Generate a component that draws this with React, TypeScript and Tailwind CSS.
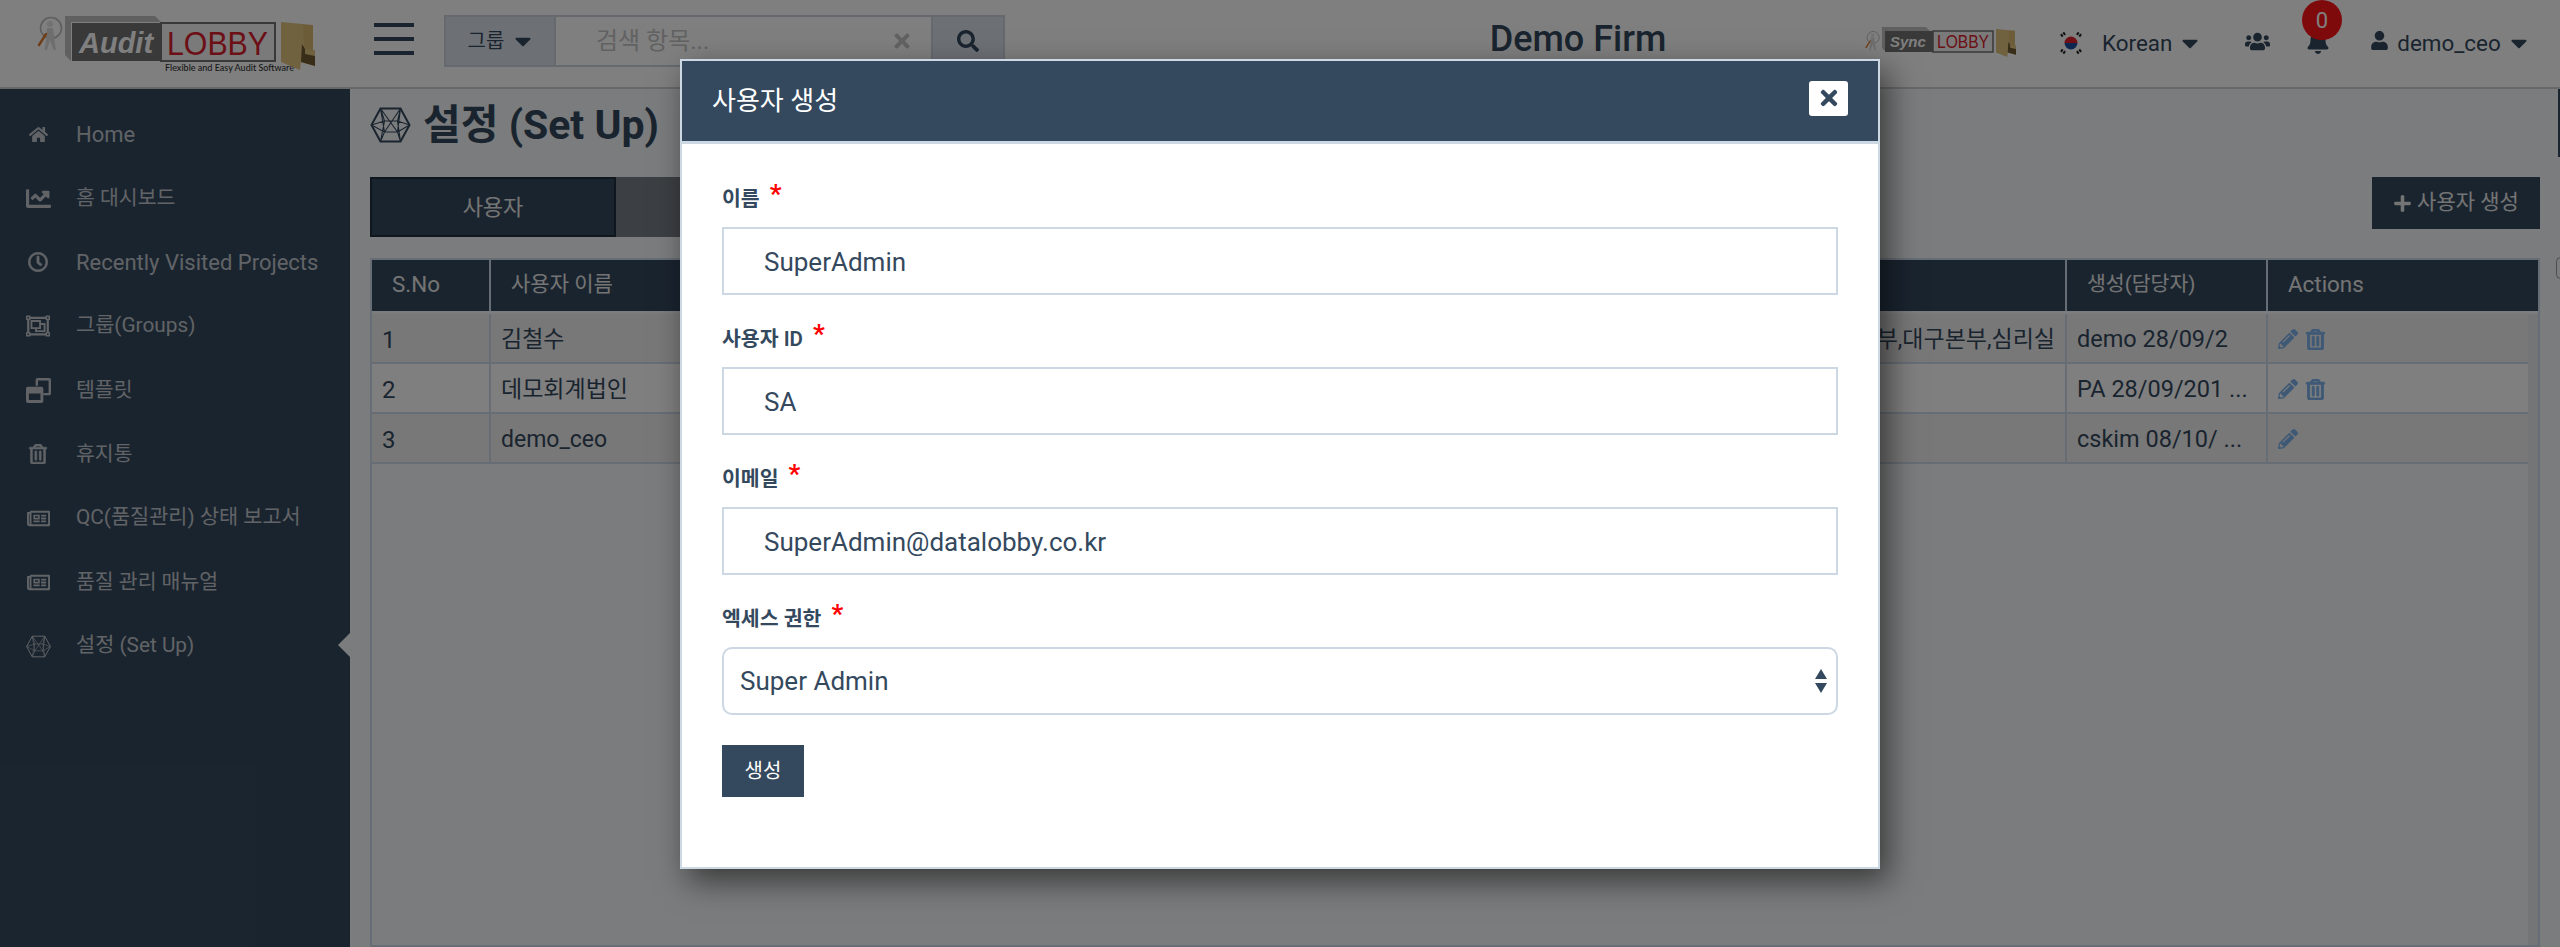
import React from "react";
import {
  FaHome, FaChartLine, FaRegClock, FaRegObjectGroup, FaRegTrashAlt, FaRegNewspaper,
  FaUsers, FaBell, FaUser, FaSearch, FaCaretDown, FaPlus, FaTimes, FaPencilAlt,
} from "react-icons/fa";

const FONT = "font-['Roboto','Noto_Sans_CJK_KR',sans-serif]";

function Hex({ className, thin }: { className?: string; thin?: boolean }) {
  return (
    <svg viewBox="0 0 40 36" className={className} fill="none" stroke="currentColor" strokeWidth={thin ? 1 : 1.1}>
      <path strokeWidth={thin ? 1.6 : 2} d="M10 1.500H30L39 18L30 34.500H10L1 18Z" />
      <path d="M10 1.500L14 14L1 18M30 1.500L27 14L39 18M10 34.500L14 25L1 18M30 34.500L27 25L39 18M14 14H27L30 34.500M14 14L10 34.500M27 25H14L10 1.500M27 25L30 1.500M10 1.500L27 25M30 1.500L14 25" />
    </svg>
  );
}

function Man({ className }: { className?: string }) {
  return (
    <svg viewBox="0 0 26 36" className={className}>
      <circle cx="14" cy="12" r="10.500" fill="none" stroke="#bdbdbd" strokeWidth="1.6" />
      <circle cx="13" cy="8" r="3" fill="#e4e4e4" />
      <path d="M10 12h6l1 9 2 13h-2.500L13 24l-3 10H7.500l2-13z" fill="#dcdcdc" />
      <path d="M9 18 2 29" stroke="#e0792a" strokeWidth="2.400" strokeLinecap="round" />
    </svg>
  );
}

function Folder({ className }: { className?: string }) {
  return (
    <svg viewBox="0 0 34 48" className={className}>
      <path d="M0 0 32 3V28H34V44L20 40 19 48 0 40Z" fill="#e0c27e" />
      <path d="M22 3 32 3V28L24 27 22 10Z" fill="#d8b870" />
      <path d="M20 40 21 22 24 27 24 32 34 34V44Z" fill="#6e5a30" />
    </svg>
  );
}

function Clone({ className }: { className?: string }) {
  return (
    <svg viewBox="0 0 26 26" className={className} fill="currentColor">
      <path fillRule="evenodd" d="M10 0H24a2 2 0 0 1 2 2V16a2 2 0 0 1-2 2H18V15.500H23.500V2.500H12.500V8H10V2a2 2 0 0 1 2-2Z" />
      <path fillRule="evenodd" d="M2 9H16a2 2 0 0 1 2 2V24a2 2 0 0 1-2 2H2a2 2 0 0 1-2-2V11a2 2 0 0 1 2-2ZM3 16V23H15V16Z" />
    </svg>
  );
}

function AuditLogo() {
  return (
    <div className="flex items-start w-[280px] h-[62px] mt-[16px] ml-[37px]">
      <Man className="w-[26px] h-[36px] shrink-0" />
      <div className="flex flex-col ml-[2px] w-[212px] shrink-0">
        <svg viewBox="0 0 212 46" className="w-[212px] h-[46px]">
          <path d="M0 0H90L96 6H6V45L0 39Z" fill="#c0c0c0" />
          <rect x="7" y="7" width="89" height="38" fill="#727272" />
          <rect x="96" y="7" width="114" height="38" fill="#f4f4f4" stroke="#727272" strokeWidth="2" />
          <text x="14" y="37" fontFamily="Liberation Sans" fontStyle="italic" fontWeight="700" fontSize="29" fill="#fff">Audit</text>
          <text x="102" y="39" fontFamily="Liberation Sans" fontSize="33" textLength="101" lengthAdjust="spacingAndGlyphs" fill="#d81e2e">LOBBY</text>
        </svg>
        <span className="text-[9px] leading-[12px] text-[#333] ml-[100px] whitespace-nowrap font-['Lato',sans-serif] font-medium">Flexible and Easy Audit Software</span>
      </div>
      <Folder className="w-[34px] h-[48px] mt-[6px] ml-[4px] shrink-0" />
    </div>
  );
}

function SyncLogo() {
  return (
    <div className="flex items-start w-[150px] h-[30px]">
      <Man className="w-[15px] h-[24px] shrink-0 mt-[2px]" />
      <svg viewBox="0 0 112 26" className="w-[112px] h-[26px] shrink-0 ml-[2px]">
        <path d="M0 0H44L48 4H3V24L0 21Z" fill="#c0c0c0" />
        <rect x="3" y="4" width="48" height="21" fill="#727272" />
        <rect x="51" y="4" width="60" height="21" fill="#f4f4f4" stroke="#727272" strokeWidth="1.500" />
        <text x="8" y="20" fontFamily="Liberation Sans" fontStyle="italic" fontWeight="700" fontSize="15" fill="#fff">Sync</text>
        <text x="55" y="21" fontFamily="Liberation Sans" fontSize="18" textLength="52" lengthAdjust="spacingAndGlyphs" fill="#d81e2e">LOBBY</text>
      </svg>
      <Folder className="w-[20px] h-[34px] mt-[-1px] ml-[2px] shrink-0" />
    </div>
  );
}

function Flag() {
  return (
    <svg viewBox="0 0 26 26" className="w-[26px] h-[26px]">
      <circle cx="13" cy="13" r="13" fill="#fff" />
      <path d="M6.500 13a6.500 6.500 0 0 1 13 0Z" fill="#e0202c" />
      <path d="M6.500 13a6.500 6.500 0 0 0 13 0Z" fill="#1a4fa0" />
      <g stroke="#222" strokeWidth="3" strokeDasharray="2 1">
        <path d="M3 6 7 3M19 3 23 6M3 20 7 23M19 23 23 20" />
      </g>
    </svg>
  );
}

function Nav({ icon, label, size, active }: { icon: React.ReactNode; label: string; size: string; active?: boolean }) {
  return (
    <div className="relative flex items-center h-[64px] text-[#c2c7cc]">
      <div className="w-[76px] shrink-0 flex justify-center">{icon}</div>
      <span className={`${size} whitespace-nowrap`}>{label}</span>
      {active && (
        <div className="absolute right-0 top-[19px] w-0 h-0 border-y-[12px] border-y-transparent border-r-[12px] border-r-[#f6f8fa]" />
      )}
    </div>
  );
}

function Row({ n, name, right, created, striped, trash }: { n: string; name: string; right?: string; created: string; striped?: boolean; trash?: boolean }) {
  return (
    <div className={`flex h-[50px] border-b-2 border-[#ccdbe9] text-[#34495e] text-[23px] ${striped ? "bg-[#f0f0f0]" : "bg-white"}`}>
      <div className="w-[119px] border-r-2 border-[#ccdbe9] pl-[10px] pt-[4px] flex items-center text-[24px]">{n}</div>
      <div className="w-[400px] pl-[10px] pt-[4px] flex items-center">{name}</div>
      <div className="flex-1 border-r-2 border-[#ccdbe9] pr-[10px] pt-[4px] flex items-center justify-end whitespace-nowrap overflow-hidden">{right}</div>
      <div className="w-[201px] border-r-2 border-[#ccdbe9] pl-[10px] pt-[4px] flex items-center whitespace-nowrap overflow-hidden text-[23.500px]">{created}</div>
      <div className="w-[260px] pl-[10px] pt-[2px] flex items-center gap-[7px] text-[#7db2ec] text-[20px]">
        <FaPencilAlt />
        {trash && <FaRegTrashAlt className="text-[21px]" stroke="currentColor" strokeWidth={24} />}
      </div>
    </div>
  );
}

function Field({ label, value }: { label: string; value: string }) {
  return (
    <div className="mb-[32px]">
      <Label text={label} />
      <input readOnly value={value} className="block w-full h-[68px] border-2 border-[#ccd8e4] bg-white pl-[40px] pt-[2px] text-[26px] text-[#34495e] outline-none" />
    </div>
  );
}

function Label({ text }: { text: string }) {
  return (
    <div className="flex items-start h-[22px] mb-[18px] pt-[1px] text-[20.500px] leading-[22px] font-semibold text-[#34495e]">
      <span className="whitespace-nowrap">{text}</span>
      <span className="ml-[10px] mt-[-6px] text-[26px] leading-[24px] font-bold text-[#ff0000]">*</span>
    </div>
  );
}

const navKo = "text-[20.500px]";
const navMix = "text-[20.800px]";

export default function App() {
  return (
    <div className={`relative w-[2560px] h-[947px] overflow-hidden bg-[#f6f8fa] ${FONT} flex flex-col`}>
      <header className="h-[89px] shrink-0 bg-white border-b-2 border-[#d0d0d0] flex items-start">
        <div className="w-[374px] shrink-0"><AuditLogo /></div>
        <div className="w-[70px] shrink-0 flex flex-col gap-[10px] pt-[23px]">
          <div className="w-[40px] h-[4px] bg-[#34495e]" />
          <div className="w-[40px] h-[4px] bg-[#34495e]" />
          <div className="w-[40px] h-[4px] bg-[#34495e]" />
        </div>
        <div className="mt-[15px] w-[561px] h-[52px] border-2 border-[#ccd5df] flex shrink-0">
          <div className="w-[110px] bg-[#dbe3ec] border-r-2 border-[#ccd5df] flex items-center justify-center gap-[6px] pl-[4px] text-[20px] text-[#34495e]">
            그룹 <FaCaretDown className="text-[26px]" />
          </div>
          <div className="flex-1 bg-white flex items-center pl-[40px] pr-[18px] justify-between text-[24px] text-[#c4c4c4]">
            <span>검색 항목...</span>
            <FaTimes className="text-[22px]" />
          </div>
          <div className="w-[72px] bg-[#dbe3ec] border-l-2 border-[#ccd5df] flex items-center justify-center text-[#34495e] text-[22px]">
            <FaSearch />
          </div>
        </div>
        <div className="w-[574px] ml-[286px] text-center text-[#34495e] text-[36px] font-medium leading-[78px] shrink-0 whitespace-nowrap">Demo Firm</div>
        <div className="flex-1 flex items-start pt-[27px] relative text-[#34495e]">
          <SyncLogo />
          <div className="ml-[43px] mt-[3px] flex items-center"><Flag /></div>
          <span className="ml-[18px] text-[22.400px] leading-[30px] mt-[1px]">Korean</span>
          <FaCaretDown className="ml-[5px] mt-[3px] text-[26px]" />
          <FaUsers className="ml-[42px] mt-[2px] text-[25px]" />
          <FaBell className="ml-[36px] mt-[3px] text-[24px]" />
          <FaUser className="ml-[40px] mt-[4px] text-[19px]" />
          <span className="ml-[8px] text-[22.400px] leading-[30px] mt-[1px]">demo_ceo</span>
          <FaCaretDown className="ml-[5px] mt-[3px] text-[26px]" />
          <div className="absolute left-[437px] top-0 w-[40px] h-[40px] rounded-full bg-[#ff1419] text-white text-[22px] flex items-center justify-center">0</div>
        </div>
      </header>

      <div className="flex-1 flex min-h-0">
        <aside className="w-[350px] shrink-0 bg-[#34495e] pt-[13px]">
          <Nav icon={<FaHome className="text-[19px]" />} label="Home" size="text-[22px]" />
          <Nav icon={<FaChartLine className="text-[25px]" />} label="홈 대시보드" size={navKo} />
          <Nav icon={<FaRegClock className="text-[20px]" stroke="currentColor" strokeWidth={16} />} label="Recently Visited Projects" size="text-[22px]" />
          <Nav icon={<FaRegObjectGroup className="text-[24px]" />} label="그룹(Groups)" size={navMix} />
          <Nav icon={<Clone className="w-[25px] h-[25px]" />} label="템플릿" size={navKo} />
          <Nav icon={<FaRegTrashAlt className="text-[20px]" stroke="currentColor" strokeWidth={16} />} label="휴지통" size={navKo} />
          <Nav icon={<FaRegNewspaper className="text-[23px]" />} label="QC(품질관리) 상태 보고서" size={navMix} />
          <Nav icon={<FaRegNewspaper className="text-[23px]" />} label="품질 관리 매뉴얼" size={navKo} />
          <Nav icon={<Hex thin className="w-[25px] h-[23px]" />} label="설정 (Set Up)" size={navMix} active />
        </aside>
        <main className="flex-1 min-w-0 pl-[20px] pr-[20px] flex flex-col relative">
          <div className="h-[88px] shrink-0 flex items-center gap-[12px] pb-[16px] text-[#34495e]">
            <Hex className="w-[41px] h-[36px]" />
            <h1 className="text-[41px] font-bold leading-none whitespace-nowrap">설정 (Set Up)</h1>
          </div>
          <div className="h-[60px] mb-[21px] shrink-0 flex items-start justify-between">
            <div className="flex h-[60px]">
              <div className="w-[246px] bg-[#34495e] border-2 border-[#1f2c3a] flex items-center justify-center text-[22px] text-[#e8e8e8]">사용자</div>
              <div className="w-[300px] bg-[#797f87]" />
            </div>
            <div className="w-[168px] h-[52px] bg-[#34495e] flex items-center justify-center gap-[5px] text-[21px] text-[#e8e8e8] whitespace-nowrap">
              <FaPlus className="text-[19px]" /> 사용자 생성
            </div>
          </div>
          <div className="flex-1 min-h-0 border-2 border-[#ccdbe9] flex flex-col">
            <div className="h-[51px] shrink-0 flex bg-[#34495e] text-[#e8e8e8] text-[22.400px]">
              <div className="w-[119px] border-r-2 border-[#ccdbe9] pl-[20px] pb-[2px] flex items-center">S.No</div>
              <div className="flex-1 border-r-2 border-[#ccdbe9] pl-[20px] pb-[2px] flex items-center text-[21px]">사용자 이름</div>
              <div className="w-[201px] border-r-2 border-[#ccdbe9] pl-[20px] pb-[2px] flex items-center whitespace-nowrap text-[20.500px]">생성(담당자)</div>
              <div className="w-[270px] pl-[20px] pb-[2px] flex items-center">Actions</div>
            </div>
            <div className="flex-1 flex min-h-0 pt-[3px]">
              <div className="flex-1 min-w-0">
                <Row n="1" name="김철수" right="대구본부,대구본부,심리실" created="demo 28/09/2" striped trash />
                <Row n="2" name="데모회계법인" created="PA 28/09/201 ..." trash />
                <Row n="3" name="demo_ceo" created="cskim 08/10/ ..." striped />
              </div>
              <div className="w-[10px] shrink-0 bg-[#e8eaed]" />
            </div>
          </div>
          <div className="absolute right-0 top-0 w-[2px] h-[68px] bg-[#34495e]" />
          <div className="absolute right-[-5px] top-[168px] w-[9px] h-[22px] rounded-full border border-[#999]" />
        </main>
      </div>

      <div className="absolute inset-0 bg-black/50 flex justify-center items-start pt-[59px]">
        <div className="w-[1200px] h-[810px] bg-white border-2 border-[#ccd8e4] shadow-[8px_12px_30px_rgba(0,0,0,0.55)]">
          <div className="h-[83px] bg-[#34495e] border-b-[3px] border-[#ccd8e4] flex items-center justify-between pl-[30px] pr-[30px]">
            <span className="text-[26px] text-white">사용자 생성</span>
            <div className="w-[39px] h-[35px] bg-white rounded-[3px] flex items-center justify-center text-[#34495e] text-[24px] mb-[6px]"><FaTimes /></div>
          </div>
          <div className="px-[40px] pt-[43px]">
            <Field label="이름" value="SuperAdmin" />
            <Field label="사용자 ID" value="SA" />
            <Field label="이메일" value="SuperAdmin@datalobby.co.kr" />
            <div className="mb-[30px]">
              <Label text="엑세스 권한" />
              <div className="h-[68px] border-2 border-[#ccd8e4] rounded-[10px] pl-[16px] pr-[9px] flex items-center justify-between text-[26px] text-[#34495e]">
                <span>Super Admin</span>
                <svg viewBox="0 0 12 24" className="w-[12px] h-[24px]" fill="#34495e">
                  <path d="M6 0 12 10H0ZM0 14H12L6 24Z" />
                </svg>
              </div>
            </div>
            <div className="w-[82px] h-[52px] bg-[#34495e] flex items-center justify-center text-[20px] text-white">생성</div>
          </div>
        </div>
      </div>
    </div>
  );
}
